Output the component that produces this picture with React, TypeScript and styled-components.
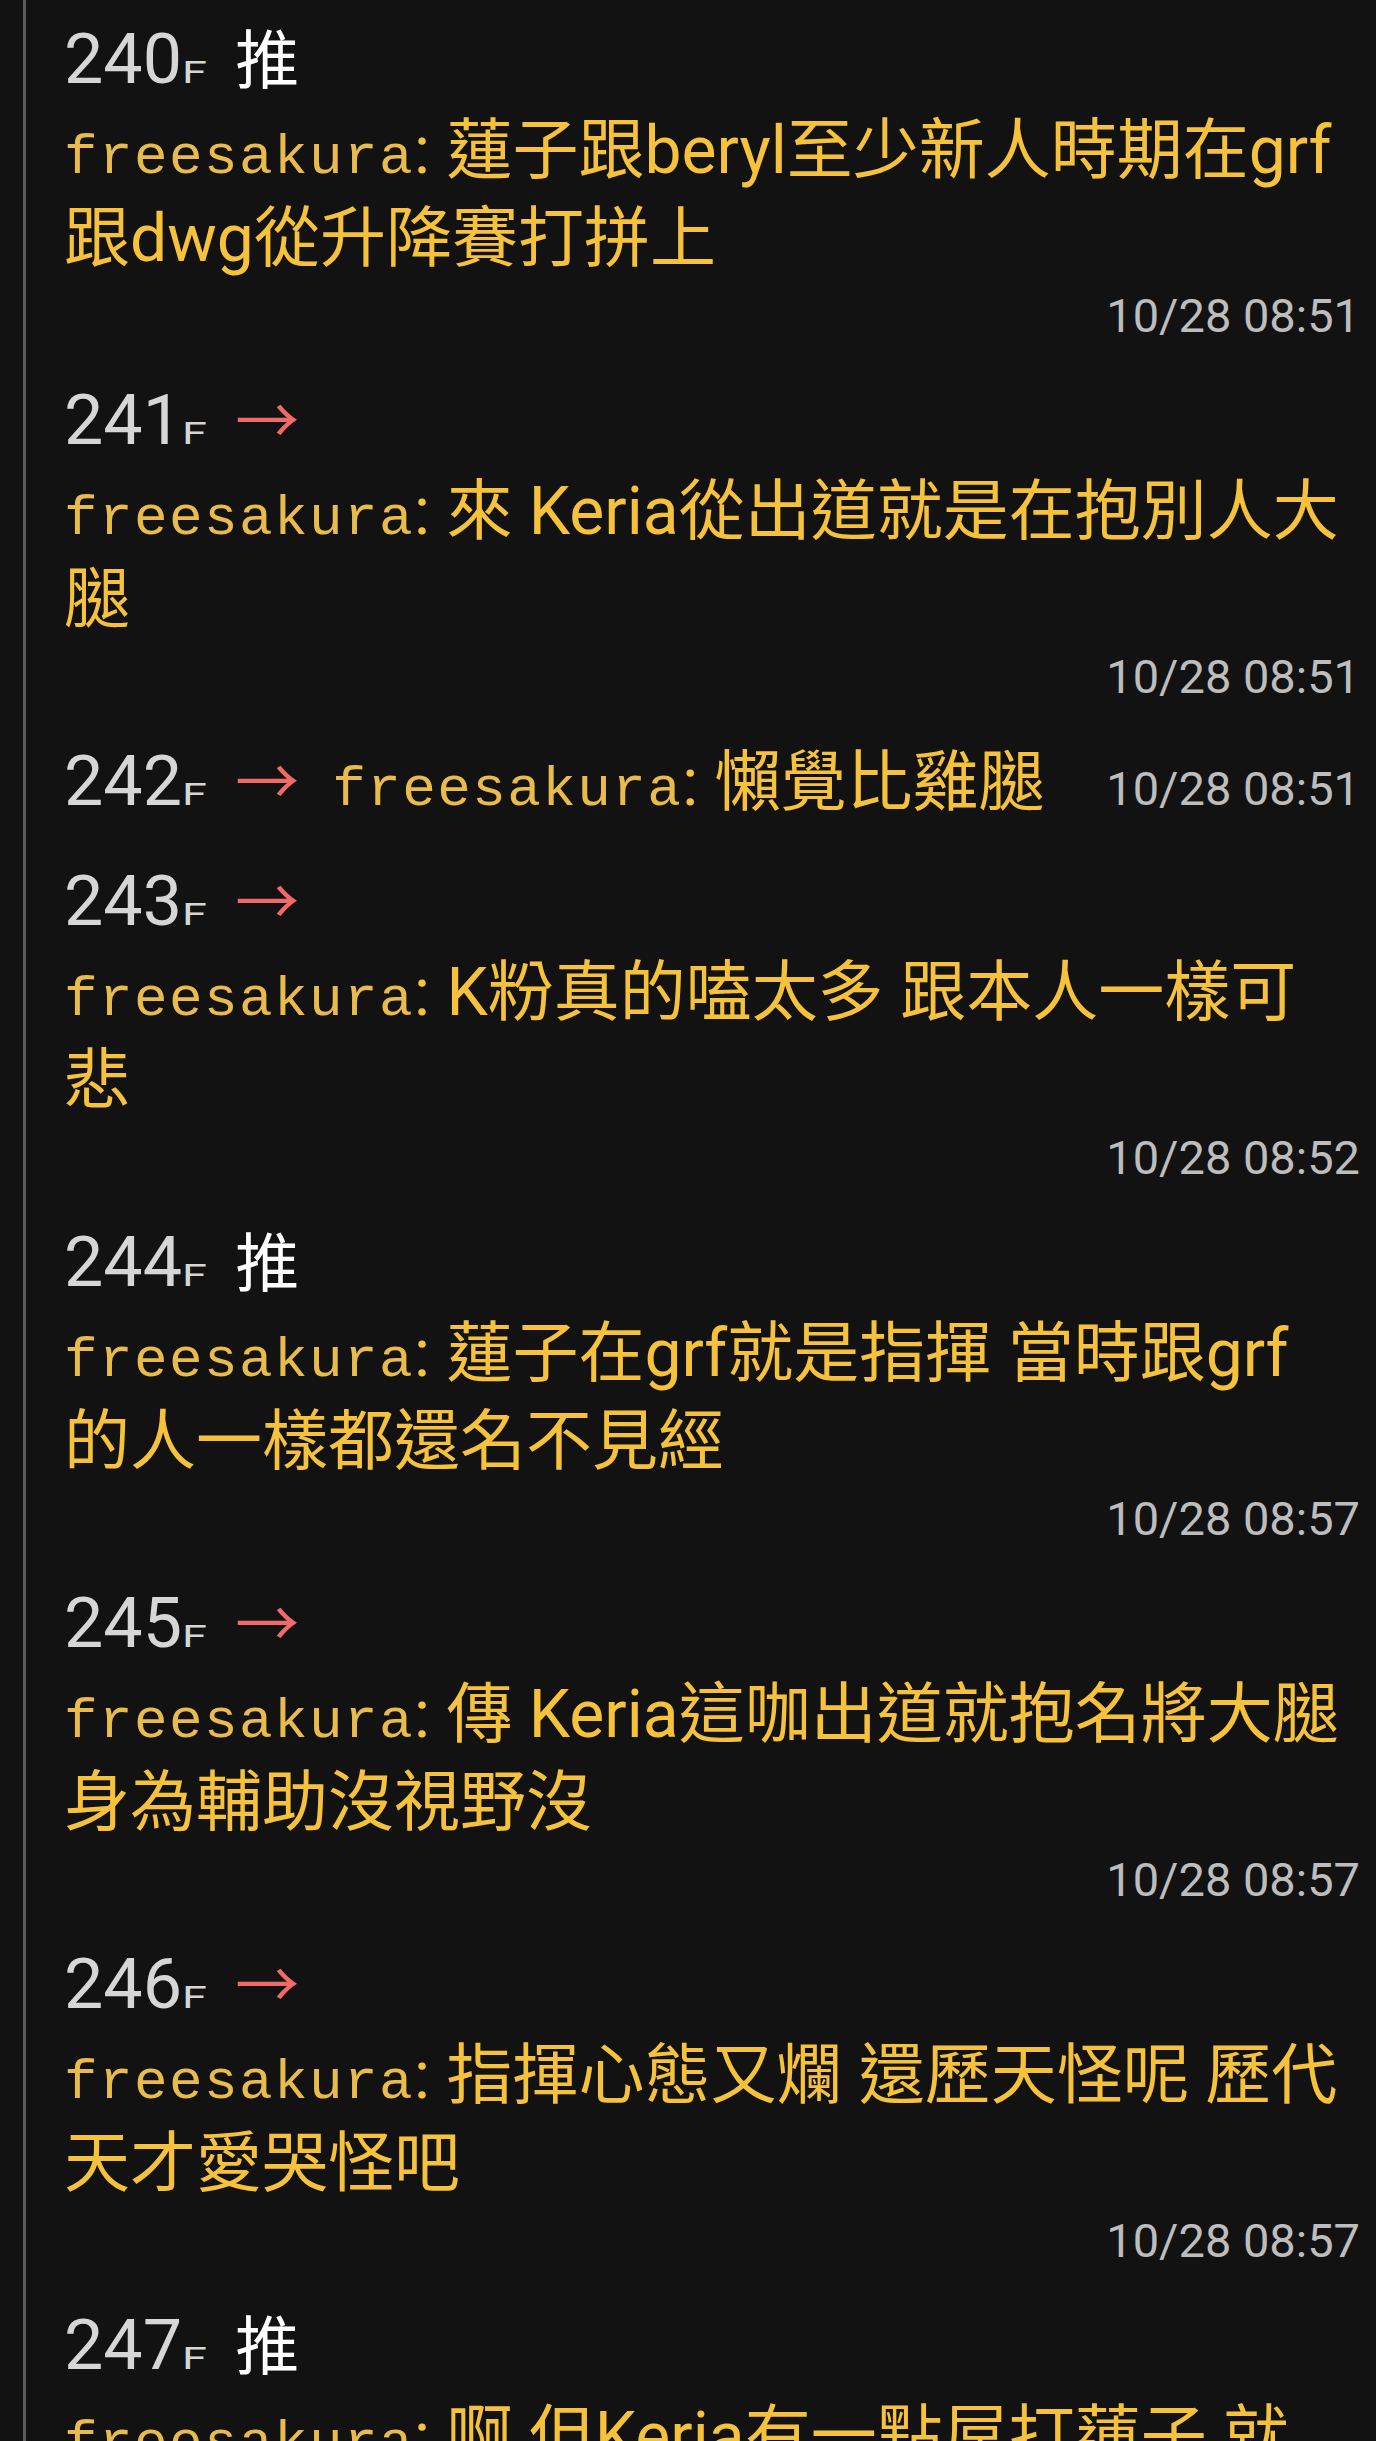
import React from 'react';
import styled, { createGlobalStyle } from 'styled-components';

const GlobalStyle = createGlobalStyle`
  html, body {
    margin: 0;
    padding: 0;
    background: #121212;
  }
  body {
    overflow: hidden;
  }
`;

const Page = styled.div`
  min-height: 100vh;
  background: #121212;
  padding-left: 23px;
  box-sizing: border-box;
  font-family: Roboto, "Noto Sans CJK TC", sans-serif;
`;

const Thread = styled.div`
  border-left: 3px solid #5a5a5a;
  padding: 11px 16px 0 38px;
  min-height: 100vh;
  box-sizing: border-box;
  display: flex;
  flex-direction: column;
  gap: 24px;
`;

const PushRow = styled.div`
  display: flex;
  flex-wrap: wrap;
  align-items: baseline;
  column-gap: 33px;
`;

const Header = styled.div`
  display: flex;
  align-items: baseline;
  gap: 36px;
`;

const Floor = styled.span`
  font-family: Roboto, sans-serif;
  font-size: 70px;
  line-height: 96px;
  color: #d6d6d6;
`;

const FloorMark = styled.span`
  display: inline-block;
  font-size: 31px;
  line-height: 1;
  transform: scaleX(1.45);
  transform-origin: left bottom;
`;

const Tag = styled.span<{ $kind: 'push' | 'arrow' }>`
  font-family: "Noto Sans CJK TC", sans-serif;
  font-size: 64px;
  line-height: 1;
  color: ${(p) => (p.$kind === 'push' ? '#ffffff' : '#f06a6a')};
`;

const Content = styled.div`
  font-size: 66px;
  line-height: 88px;
  color: #f6c23b;
  max-width: calc(100% - 13px);
`;

const User = styled.span`
  font-family: "Liberation Mono", monospace;
  font-size: 56px;
  letter-spacing: 1.4px;
  line-height: 1;
  color: #e9bb4c;
`;

const Time = styled.span`
  margin-left: auto;
  font-family: Roboto, sans-serif;
  font-size: 47px;
  line-height: 65px;
  color: #bdbdbd;
`;

type Push = {
  floor: number;
  kind: 'push' | 'arrow';
  text: string;
  time: string;
};

const pushes: Push[] = [
  { floor: 240, kind: 'push', text: '蓮子跟beryl至少新人時期在grf跟dwg從升降賽打拼上', time: '10/28 08:51' },
  { floor: 241, kind: 'arrow', text: '來 Keria從出道就是在抱別人大腿', time: '10/28 08:51' },
  { floor: 242, kind: 'arrow', text: '懶覺比雞腿', time: '10/28 08:51' },
  { floor: 243, kind: 'arrow', text: 'K粉真的嗑太多 跟本人一樣可悲', time: '10/28 08:52' },
  { floor: 244, kind: 'push', text: '蓮子在grf就是指揮 當時跟grf的人一樣都還名不見經', time: '10/28 08:57' },
  { floor: 245, kind: 'arrow', text: '傳 Keria這咖出道就抱名將大腿身為輔助沒視野沒', time: '10/28 08:57' },
  { floor: 246, kind: 'arrow', text: '指揮心態又爛 還歷天怪呢 歷代天才愛哭怪吧', time: '10/28 08:57' },
  { floor: 247, kind: 'push', text: '啊 但Keria有一點屌打蓮子 就', time: '10/28 08:58' },
];

export default function App() {
  return (
    <>
      <GlobalStyle />
      <Page>
        <Thread>
          {pushes.map((p) => (
            <PushRow key={p.floor}>
              <Header>
                <Floor>
                  {p.floor}
                  <FloorMark>F</FloorMark>
                </Floor>
                <Tag $kind={p.kind}>{p.kind === 'push' ? '推' : '→'}</Tag>
              </Header>
              <Content>
                <User>freesakura</User>: {p.text}
              </Content>
              <Time>{p.time}</Time>
            </PushRow>
          ))}
        </Thread>
      </Page>
    </>
  );
}
